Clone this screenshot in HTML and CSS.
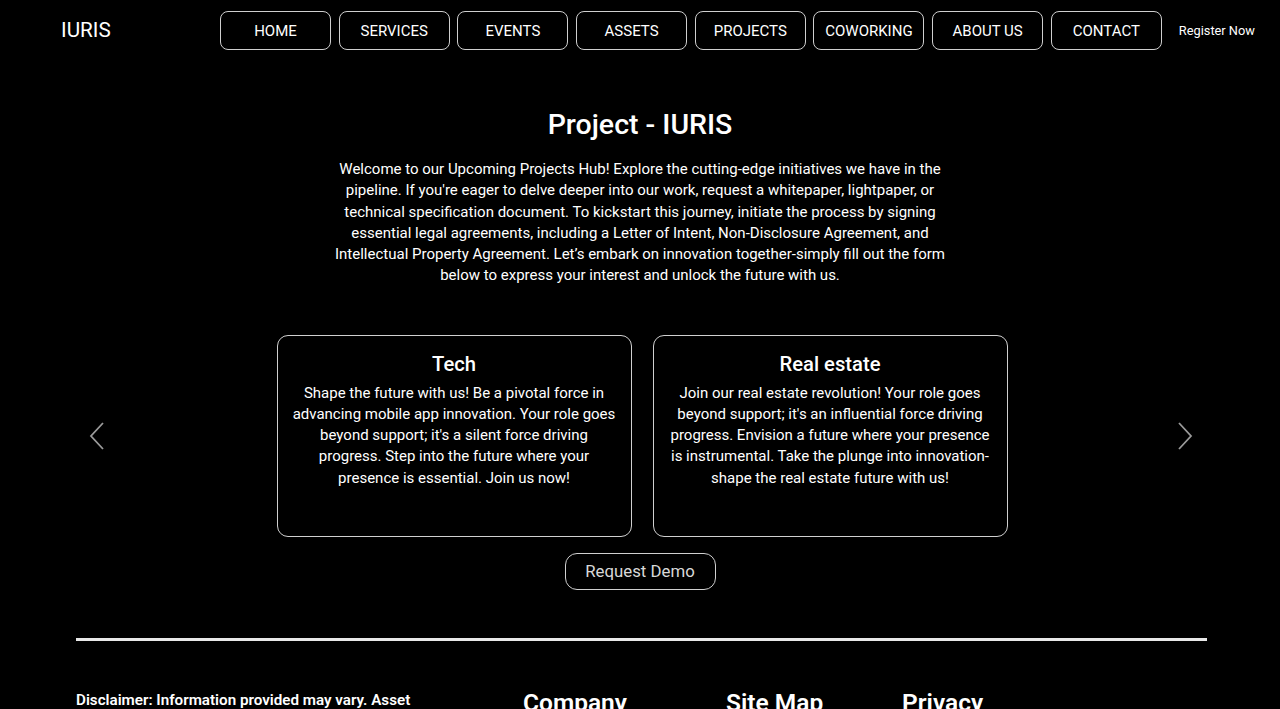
FILE: index.html
```html
<!DOCTYPE html>
<html lang="en">
<head>
<meta charset="utf-8">
<title>Project - IURIS</title>
<link rel="stylesheet" href="styles.css">
</head>
<body>
<header class="header">
  <div class="logo">IURIS</div>
  <nav class="nav">
    <a class="nav-btn" href="#">HOME</a>
    <a class="nav-btn" href="#">SERVICES</a>
    <a class="nav-btn" href="#">EVENTS</a>
    <a class="nav-btn" href="#">ASSETS</a>
    <a class="nav-btn" href="#">PROJECTS</a>
    <a class="nav-btn" href="#">COWORKING</a>
    <a class="nav-btn" href="#">ABOUT US</a>
    <a class="nav-btn" href="#">CONTACT</a>
  </nav>
  <a class="register" href="#">Register Now</a>
</header>

<main class="main">
  <h1 class="title">Project - IURIS</h1>
  <p class="intro">Welcome to our Upcoming Projects Hub! Explore the cutting-edge initiatives we have in the pipeline. If you're eager to delve deeper into our work, request a whitepaper, lightpaper, or technical specification document. To kickstart this journey, initiate the process by signing essential legal agreements, including a Letter of Intent, Non-Disclosure Agreement, and Intellectual Property Agreement. Let’s embark on innovation together-simply fill out the form below to express your interest and unlock the future with us.</p>

  <section class="carousel">
    <button class="arrow" aria-label="Previous">
      <svg width="18" height="30" viewBox="0 0 18 30"><path d="M15 2 L3 15 L15 28" fill="none" stroke="#9a9a9a" stroke-width="1.8"/></svg>
    </button>
    <div class="cards">
      <div class="card">
        <h2 class="card-title">Tech</h2>
        <p class="card-text">Shape the future with us! Be a pivotal force in advancing mobile app innovation. Your role goes beyond support; it's a silent force driving progress. Step into the future where your presence is essential. Join us now!</p>
      </div>
      <div class="card">
        <h2 class="card-title">Real estate</h2>
        <p class="card-text">Join our real estate revolution! Your role goes beyond support; it's an influential force driving progress. Envision a future where your presence is instrumental. Take the plunge into innovation-shape the real estate future with us!</p>
      </div>
    </div>
    <button class="arrow" aria-label="Next">
      <svg width="18" height="30" viewBox="0 0 18 30"><path d="M3 2 L15 15 L3 28" fill="none" stroke="#9a9a9a" stroke-width="1.8"/></svg>
    </button>
  </section>

  <div class="demo-wrap"><button class="demo">Request Demo</button></div>
</main>

<footer class="footer">
  <hr class="rule">
  <div class="footer-cols">
    <p class="disclaimer">Disclaimer: Information provided may vary. Asset</p>
    <h3 class="fcol company">Company</h3>
    <h3 class="fcol sitemap">Site Map</h3>
    <h3 class="fcol privacy">Privacy</h3>
  </div>
</footer>
</body>
</html>
```

FILE: styles.css
```css
* { box-sizing: border-box; }
html, body { margin: 0; padding: 0; background: #000; }
body {
  color: #fff;
  font-family: Roboto, "Liberation Sans", Arial, sans-serif;
  width: 1280px;
  height: 709px;
  overflow: hidden;
}
a { color: inherit; text-decoration: none; }

.header {
  display: flex;
  align-items: flex-start;
  height: 61px;
  padding: 11px 0 0 61px;
}
.logo {
  font-size: 20.7px;
  line-height: 39px;
  width: 159px;
}
.nav { display: flex; gap: 7.7px; }
.nav-btn {
  width: 111px;
  height: 39px;
  border: 1px solid #cfcfcf;
  border-radius: 8px;
  display: flex;
  align-items: center;
  justify-content: center;
  font-size: 15px;
}
.register {
  margin-left: 17px;
  font-size: 12.8px;
  line-height: 39px;
}

.main { display: flex; flex-direction: column; align-items: center; }
.title {
  margin: 46px 0 0;
  font-size: 28.5px;
  font-weight: 500;
  line-height: 36px;
}
.intro {
  margin: 16px 0 0;
  width: 618px;
  text-align: center;
  font-size: 15px;
  line-height: 21.3px;
}

.carousel {
  margin-top: 48px;
  width: 100%;
  display: flex;
  justify-content: space-between;
  align-items: center;
  padding: 0 84px 0 88px;
}
.arrow {
  background: none;
  border: 0;
  padding: 0;
  width: 20px;
  height: 30px;
  display: flex;
  cursor: pointer;
}
.cards { display: flex; gap: 21px; }
.card {
  width: 355px;
  height: 202px;
  border: 1px solid #d0d0d0;
  border-radius: 11px;
  padding: 15px 13px 0;
  text-align: center;
}
.card-title {
  margin: 0;
  font-size: 20.2px;
  font-weight: 500;
  line-height: 27px;
}
.card-text {
  margin: 5px 0 0;
  font-size: 15px;
  line-height: 21.2px;
}

.demo-wrap { margin-top: 16px; }
.demo {
  width: 151px;
  height: 37px;
  background: #000;
  color: #d8d8d8;
  border: 1px solid #d0d0d0;
  border-radius: 12px;
  font-family: inherit;
  font-size: 16.8px;
}

.footer { padding: 0 73px 0 76px; }
.rule {
  margin: 48px 0 0;
  border: 0;
  height: 3px;
  background: #e8e8e8;
}
.footer-cols {
  display: flex;
  align-items: flex-start;
  margin-top: 49px;
}
.disclaimer {
  margin: 0;
  width: 447px;
  font-size: 15.2px;
  font-weight: 600;
  line-height: 20px;
}
.fcol {
  margin: -2px 0 0;
  font-size: 24.5px;
  font-weight: 600;
  line-height: 30px;
}
.company { width: 203px; }
.sitemap { width: 176px; }
```
